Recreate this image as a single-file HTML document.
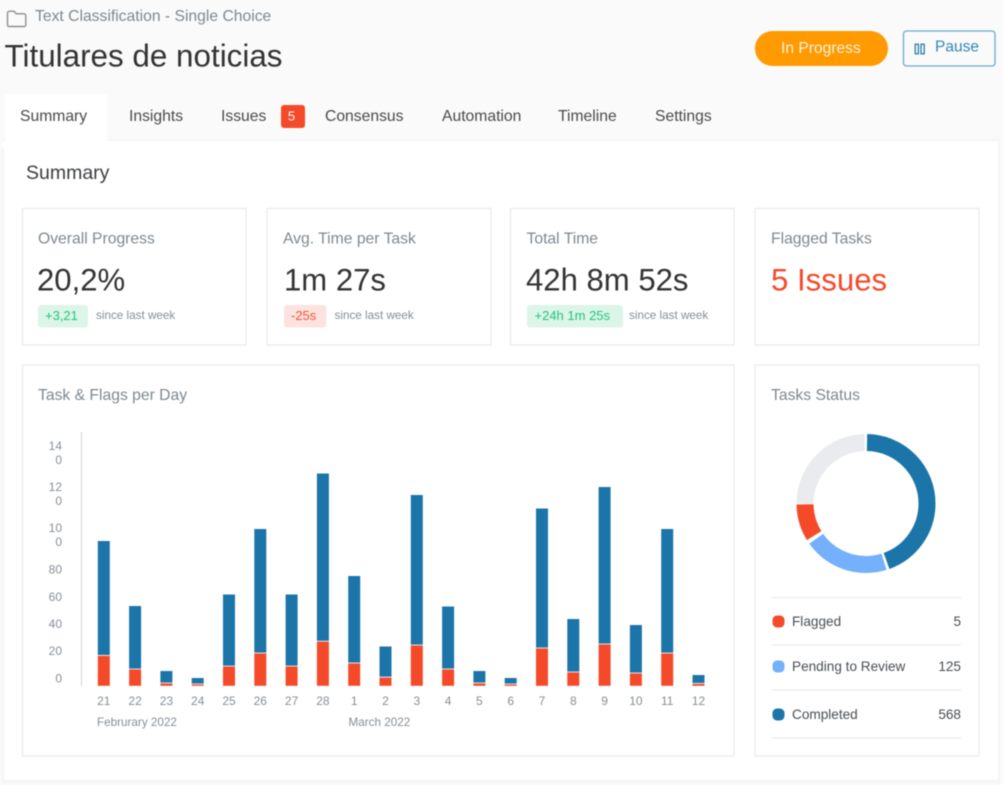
<!DOCTYPE html>
<html lang="en">
<head>
<meta charset="utf-8">
<title>Titulares de noticias</title>
<style>
html,body{margin:0;padding:0;width:1003px;height:785px;overflow:hidden;background:#fafafa}
svg{display:block;filter:blur(.45px)}
text{font-family:"Liberation Sans",sans-serif}
.tab{font-size:15.7px;fill:#4a4a4a}
.ct{font-size:15.7px;fill:#7e8890}
.big{font-size:31.1px;fill:#333}
.since{font-size:11.7px;fill:#868e96}
.tick{font-size:12px;fill:#868e96}
.leg{font-size:13.6px;fill:#4a4f54}
.card{fill:#fff;stroke:#ebebeb;stroke-width:1.3}
.b{fill:#1c75a8}
.r{fill:#f44a2a}
.sep{stroke:#ebebeb;stroke-width:1.3}
</style>
</head>
<body>
<svg width="1003" height="785" viewBox="0 0 1003 785" xmlns="http://www.w3.org/2000/svg">
<rect x="0" y="0" width="1003" height="785" fill="#fafafa"/>

<!-- header -->
<path d="M7.5 25V13.2a2 2 0 0 1 2-2H14l2.2 2.6h7.8a1.8 1.8 0 0 1 1.8 1.8V25a1.5 1.5 0 0 1-1.5 1.5H9A1.5 1.5 0 0 1 7.5 25Z" fill="none" stroke="#8b9094" stroke-width="1.4"/>
<text x="35" y="21" font-size="15.7" fill="#7e8890">Text Classification - Single Choice</text>
<text x="4.5" y="66.5" font-size="31.4" fill="#333">Titulares de noticias</text>

<rect x="755" y="31" width="133" height="35" rx="17.5" fill="#ff9a00"/>
<text x="781" y="53" font-size="15.6" fill="#fff3dd">In Progress</text>
<rect x="903.5" y="31" width="91.5" height="35" rx="3" fill="#fafafa" stroke="#6fa9cc" stroke-width="1.3"/>
<rect x="915.2" y="44.2" width="3.2" height="9.6" fill="none" stroke="#1c75a8" stroke-width="1.2"/>
<rect x="921" y="44.2" width="3.2" height="9.6" fill="none" stroke="#1c75a8" stroke-width="1.2"/>
<text x="935" y="51.5" font-size="15.5" fill="#3388b8">Pause</text>

<!-- panel -->
<rect x="2" y="139" width="998" height="644" fill="#f5f5f5"/>
<rect x="4" y="141" width="994" height="639" fill="#fff"/>
<rect x="5" y="94" width="102" height="50" fill="#fff"/>
<rect x="2" y="141" width="108" height="7" fill="#fff"/>

<!-- tabs -->
<text class="tab" x="20" y="121">Summary</text>
<text class="tab" x="129" y="121">Insights</text>
<text class="tab" x="221" y="121">Issues</text>
<rect x="281" y="105" width="24" height="23" rx="3" fill="#f44a2a"/>
<text x="291.5" y="120.5" font-size="13" fill="#fff" text-anchor="middle">5</text>
<text class="tab" x="325" y="121">Consensus</text>
<text class="tab" x="442" y="121">Automation</text>
<text class="tab" x="558" y="121">Timeline</text>
<text class="tab" x="655" y="121">Settings</text>

<text x="26" y="179" font-size="19.5" fill="#3c3f42">Summary</text>

<!-- cards -->
<rect class="card" x="22.5" y="208.5" width="223.5" height="136.5"/>
<rect class="card" x="267" y="208.5" width="224" height="136.5"/>
<rect class="card" x="510.5" y="208.5" width="223.5" height="136.5"/>
<rect class="card" x="755" y="208.5" width="224" height="136.5"/>
<rect class="card" x="22.5" y="365" width="711.5" height="391"/>
<rect class="card" x="755" y="365" width="224" height="391"/>

<text class="ct" x="38" y="243.5">Overall Progress</text>
<text class="big" x="37" y="290.5">20,2%</text>
<rect x="38" y="305" width="50" height="22.5" rx="3" fill="#dcf5e9"/>
<text x="45" y="320" font-size="13" fill="#22c576">+3,21</text>
<text class="since" x="96" y="319">since last week</text>

<text class="ct" x="283" y="243.5">Avg. Time per Task</text>
<text class="big" x="284" y="290.5">1m 27s</text>
<rect x="284" y="305" width="42.5" height="22.5" rx="3" fill="#fde3df"/>
<text x="291" y="320" font-size="13" fill="#f4533a">-25s</text>
<text class="since" x="334.5" y="319">since last week</text>

<text class="ct" x="526.5" y="243.5">Total Time</text>
<text class="big" x="526" y="290.5">42h 8m 52s</text>
<rect x="527" y="305" width="96" height="22.5" rx="3" fill="#dcf5e9"/>
<text x="534.5" y="320" font-size="13" fill="#22c576">+24h 1m 25s</text>
<text class="since" x="629" y="319">since last week</text>

<text class="ct" x="771" y="243.5">Flagged Tasks</text>
<text x="771" y="290.5" font-size="31.2" fill="#f44a2a">5 Issues</text>

<!-- bar chart -->
<text class="ct" x="38" y="400">Task &amp; Flags per Day</text>
<text class="ct" x="771" y="400">Tasks Status</text>

<line x1="81.5" y1="432" x2="81.5" y2="686" stroke="#d2d4d6" stroke-width="1"/>

<g text-anchor="end" class="tick">
<text class="tick" x="62" y="450">14</text>
<text class="tick" x="62" y="464">0</text>
<text class="tick" x="62" y="491">12</text>
<text class="tick" x="62" y="505">0</text>
<text class="tick" x="62" y="532">10</text>
<text class="tick" x="62" y="546">0</text>
<text class="tick" x="62" y="573.5">80</text>
<text class="tick" x="62" y="601">60</text>
<text class="tick" x="62" y="628">40</text>
<text class="tick" x="62" y="655">20</text>
<text class="tick" x="62" y="682.5">0</text>
</g>

<g>
<rect class="b" x="97.8" y="541" width="12" height="114"/><rect class="r" x="97.8" y="655.8" width="12" height="30"/>
<rect class="b" x="129.1" y="606" width="12" height="62.6"/><rect class="r" x="129.1" y="669.4" width="12" height="16.4"/>
<rect class="b" x="160.4" y="671" width="12" height="11.6"/><rect class="r" x="160.4" y="683.4" width="12" height="2.4"/>
<rect class="b" x="191.7" y="678" width="12" height="5.6"/><rect class="r" x="191.7" y="684.4" width="12" height="1.4"/>
<rect class="b" x="223" y="594.5" width="12" height="71.2"/><rect class="r" x="223" y="666.5" width="12" height="19.3"/>
<rect class="b" x="254.3" y="529" width="12" height="123.6"/><rect class="r" x="254.3" y="653.4" width="12" height="32.4"/>
<rect class="b" x="285.6" y="594.5" width="12" height="71.2"/><rect class="r" x="285.6" y="666.5" width="12" height="19.3"/>
<rect class="b" x="316.9" y="473.5" width="12" height="167.3"/><rect class="r" x="316.9" y="641.6" width="12" height="44.2"/>
<rect class="b" x="348.2" y="576" width="12" height="86.6"/><rect class="r" x="348.2" y="663.4" width="12" height="22.4"/>
<rect class="b" x="379.5" y="646.5" width="12" height="30.2"/><rect class="r" x="379.5" y="677.6" width="12" height="8.2"/>
<rect class="b" x="410.8" y="495" width="12" height="149.6"/><rect class="r" x="410.8" y="645.4" width="12" height="40.4"/>
<rect class="b" x="442.1" y="606.5" width="12" height="62.1"/><rect class="r" x="442.1" y="669.4" width="12" height="16.4"/>
<rect class="b" x="473.4" y="671" width="12" height="11.6"/><rect class="r" x="473.4" y="683.4" width="12" height="2.4"/>
<rect class="b" x="504.7" y="678" width="12" height="5.6"/><rect class="r" x="504.7" y="684.4" width="12" height="1.4"/>
<rect class="b" x="536" y="508.5" width="12" height="139.1"/><rect class="r" x="536" y="648.4" width="12" height="37.4"/>
<rect class="b" x="567.3" y="619" width="12" height="52.6"/><rect class="r" x="567.3" y="672.4" width="12" height="13.4"/>
<rect class="b" x="598.6" y="487" width="12" height="156.6"/><rect class="r" x="598.6" y="644.4" width="12" height="41.4"/>
<rect class="b" x="629.9" y="625" width="12" height="47.6"/><rect class="r" x="629.9" y="673.4" width="12" height="12.4"/>
<rect class="b" x="661.2" y="529" width="12" height="123.6"/><rect class="r" x="661.2" y="653.4" width="12" height="32.4"/>
<rect class="b" x="692.5" y="675" width="12" height="8"/><rect class="r" x="692.5" y="683.8" width="12" height="2"/>
</g>

<g text-anchor="middle">
<text class="tick" x="103.8" y="705">21</text>
<text class="tick" x="135.1" y="705">22</text>
<text class="tick" x="166.4" y="705">23</text>
<text class="tick" x="197.7" y="705">24</text>
<text class="tick" x="229" y="705">25</text>
<text class="tick" x="260.3" y="705">26</text>
<text class="tick" x="291.6" y="705">27</text>
<text class="tick" x="322.9" y="705">28</text>
<text class="tick" x="354.2" y="705">1</text>
<text class="tick" x="385.5" y="705">2</text>
<text class="tick" x="416.8" y="705">3</text>
<text class="tick" x="448.1" y="705">4</text>
<text class="tick" x="479.4" y="705">5</text>
<text class="tick" x="510.7" y="705">6</text>
<text class="tick" x="542" y="705">7</text>
<text class="tick" x="573.3" y="705">8</text>
<text class="tick" x="604.6" y="705">9</text>
<text class="tick" x="635.9" y="705">10</text>
<text class="tick" x="667.2" y="705">11</text>
<text class="tick" x="698.5" y="705">12</text>
</g>
<text class="tick" x="97" y="726" style="font-size:11.7px">Februrary 2022</text>
<text class="tick" x="348.5" y="726" style="font-size:11.7px">March 2022</text>

<!-- donut: r=61, stroke 17, dash units = degrees via pathLength -->
<g transform="rotate(-90 866 503.5)" fill="none" stroke-width="17">
<circle cx="866" cy="503.5" r="61" pathLength="360" stroke="#1c75a8" stroke-dasharray="159.5 360" stroke-dashoffset="-1"/>
<circle cx="866" cy="503.5" r="61" pathLength="360" stroke="#74b0fb" stroke-dasharray="72 360" stroke-dashoffset="-163"/>
<circle cx="866" cy="503.5" r="61" pathLength="360" stroke="#f44a2a" stroke-dasharray="31 360" stroke-dashoffset="-238.5"/>
<circle cx="866" cy="503.5" r="61" pathLength="360" stroke="#e9ebee" stroke-dasharray="88.5 360" stroke-dashoffset="-270.5"/>
</g>

<!-- legend -->
<line class="sep" x1="772" y1="597.5" x2="961" y2="597.5"/>
<line class="sep" x1="772" y1="645" x2="961" y2="645"/>
<line class="sep" x1="772" y1="690" x2="961" y2="690"/>
<line class="sep" x1="772" y1="738" x2="961" y2="738"/>
<rect x="772.5" y="615.5" width="12" height="12" rx="4.5" fill="#f44a2a"/>
<rect x="772.5" y="660.5" width="12" height="12" rx="4.5" fill="#74b0fb"/>
<rect x="772.5" y="708.5" width="12" height="12" rx="4.5" fill="#1c75a8"/>
<text class="leg" x="792" y="626">Flagged</text>
<text class="leg" x="792" y="671">Pending to Review</text>
<text class="leg" x="792" y="719">Completed</text>
<text class="leg" x="961" y="626" text-anchor="end">5</text>
<text class="leg" x="961" y="671" text-anchor="end">125</text>
<text class="leg" x="961" y="719" text-anchor="end">568</text>
</svg>
</body>
</html>
